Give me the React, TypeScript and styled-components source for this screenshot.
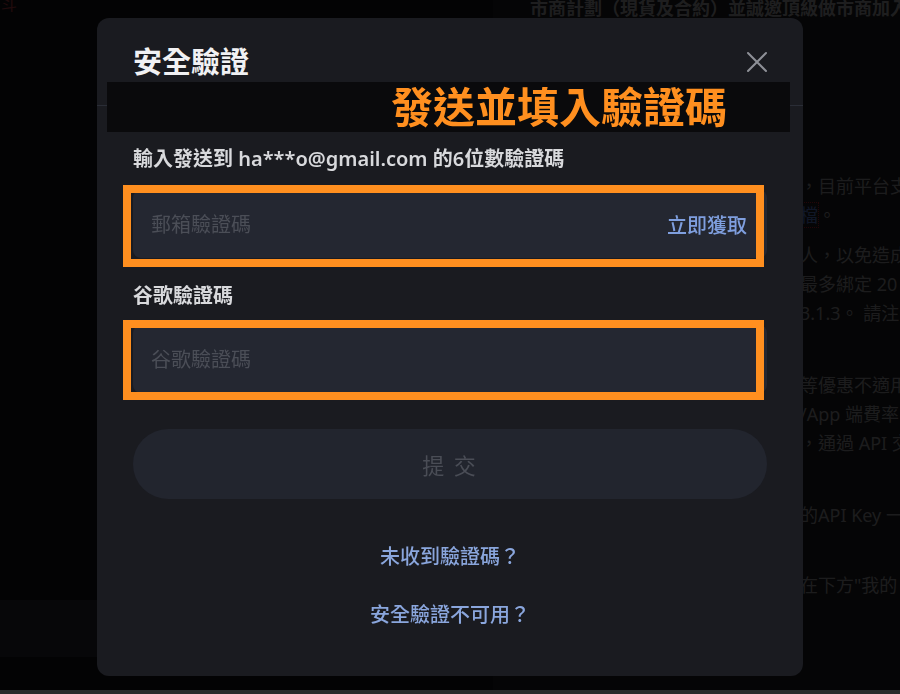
import React from "react";
import styled, { createGlobalStyle } from "styled-components";

const GlobalStyle = createGlobalStyle`
  * { box-sizing: border-box; }
  html, body { margin: 0; padding: 0; }
  body {
    background: #d3d4d6;
    font-family: "Noto Sans", "Noto Sans CJK TC", sans-serif;
  }
`;

const Page = styled.div`
  display: flex;
  width: 900px;
  height: 690px;
  overflow: hidden;
`;

const LeftPane = styled.div`
  width: 493px;
  display: flex;
  flex-direction: column;
  background: #101014;
`;

const FadedGlyph = styled.div`
  height: 12px;
  overflow: hidden;
  font-size: 16px;
  line-height: 10px;
  color: #a03840;
  padding-left: 1px;
`;

const FooterBand = styled.div`
  margin-top: auto;
  margin-bottom: 33px;
  height: 57px;
  background: #24242e;
`;

const RightPane = styled.div`
  flex: 1;
  display: flex;
  flex-direction: column;
  background: #1a1a1e;
  padding-left: 37px;
  overflow: hidden;
`;

const TopLine = styled.div`
  height: 16px;
  line-height: 16px;
  font-size: 18px;
  font-weight: 700;
  color: #98989c;
  white-space: nowrap;
`;

const SideColumn = styled.div`
  margin-top: 156px;
  margin-left: 270px;
  width: 100px;
  display: flex;
  flex-direction: column;
`;

const Para = styled.div<{ $gap: number }>`
  margin-top: ${(p) => p.$gap}px;
  font-size: 18px;
  line-height: 29px;
  color: #8e8e92;
  white-space: nowrap;
`;

const DocLink = styled.span`
  color: #5272c0;
  outline: 1px dotted #b01e28;
`;

const Mask = styled.div`
  position: fixed;
  inset: 0;
  height: 694px;
  background: rgba(0, 0, 0, 0.8);
  display: flex;
  align-items: center;
  justify-content: center;
`;

const Modal = styled.div`
  position: relative;
  width: 706px;
  height: 658px;
  background: #1a1b20;
  border-radius: 12px;
  display: flex;
  flex-direction: column;
`;

const Header = styled.div`
  height: 88px;
  padding: 0 35px 0 36px;
  display: flex;
  align-items: center;
  justify-content: space-between;
  border-bottom: 1px solid #2a2d36;
`;

const Title = styled.h2`
  margin: 0;
  font-size: 29px;
  line-height: 36px;
  font-weight: 700;
  color: #f1f1f3;
`;

const CloseButton = styled.button`
  width: 22px;
  height: 22px;
  padding: 0;
  border: none;
  background: none;
  display: flex;
  align-items: center;
  justify-content: center;
  cursor: pointer;
`;

const Annotation = styled.div`
  position: absolute;
  top: 64px;
  left: 10px;
  width: 683px;
  height: 50px;
  background: #0a0a0c;
  display: flex;
  align-items: center;
  justify-content: flex-end;
  padding-right: 63px;
  font-size: 42px;
  line-height: 50px;
  font-weight: 700;
  color: #ff8f1f;
`;

const Body = styled.div`
  padding: 39px 36px 0;
  display: flex;
  flex-direction: column;
`;

const Label = styled.div<{ $top?: number; $bottom: number }>`
  margin-top: ${(p) => p.$top ?? 0}px;
  margin-bottom: ${(p) => p.$bottom}px;
  font-size: 20px;
  line-height: 28px;
  font-weight: 600;
  color: #d8d9dc;
`;

const Field = styled.div`
  position: relative;
  height: 68px;
  border-radius: 8px;
  background: #242731;
  display: flex;
  align-items: center;
  padding: 0 20px 0 18px;
`;

const CodeInput = styled.input`
  flex: 1;
  min-width: 0;
  border: none;
  outline: none;
  background: transparent;
  padding: 0;
  font-family: "Noto Sans", "Noto Sans CJK TC", sans-serif;
  font-size: 20px;
  color: #e0e0e0;
  &::placeholder {
    color: #4b4e57;
  }
`;

const FetchCode = styled.span`
  font-size: 20px;
  font-weight: 500;
  color: #7f9fdf;
`;

const Highlight = styled.div<{ $bottom: number }>`
  position: absolute;
  top: -5px;
  left: -10px;
  right: 3px;
  bottom: ${(p) => -p.$bottom}px;
  border: 8px solid #ff8f1f;
  pointer-events: none;
`;

const SubmitButton = styled.button`
  margin-top: 36px;
  height: 70px;
  border: none;
  border-radius: 35px;
  background: #22252e;
  font-family: "Noto Sans", "Noto Sans CJK TC", sans-serif;
  font-size: 22px;
  letter-spacing: 2px;
  color: #4a4d56;
`;

const HelpLink = styled.a<{ $top: number }>`
  margin-top: ${(p) => p.$top}px;
  align-self: center;
  font-size: 20px;
  line-height: 28px;
  font-weight: 500;
  color: #8aa6dd;
  text-decoration: none;
`;

const CloseIcon = () => (
  <svg width="22" height="22" viewBox="0 0 22 22" fill="none">
    <path d="M2 2 L20 20 M20 2 L2 20" stroke="#8e9097" strokeWidth="2" strokeLinecap="round" />
  </svg>
);

export default function App() {
  return (
    <>
      <GlobalStyle />
      <Page>
        <LeftPane>
          <FadedGlyph>斗</FadedGlyph>
          <FooterBand />
        </LeftPane>
        <RightPane>
          <TopLine>市商計劃（現貨及合約）並誠邀頂級做市商加入</TopLine>
          <SideColumn>
            <Para $gap={0}>
              ，目前平台支持
              <br />
              <DocLink>檔</DocLink>。
            </Para>
            <Para $gap={11}>
              人，以免造成
              <br />
              最多綁定 20 個
              <br />
              3.1.3。 請注意
            </Para>
            <Para $gap={43}>
              等優惠不適用
              <br />
              /App 端費率
              <br />
              ，通過 API 交易
            </Para>
            <Para $gap={43}>的API Key 一</Para>
            <Para $gap={41}>在下方"我的</Para>
          </SideColumn>
        </RightPane>
      </Page>
      <Mask>
        <Modal>
          <Header>
            <Title>安全驗證</Title>
            <CloseButton aria-label="close">
              <CloseIcon />
            </CloseButton>
          </Header>
          <Annotation>發送並填入驗證碼</Annotation>
          <Body>
            <Label $bottom={17}>輸入發送到 ha***o@gmail.com 的6位數驗證碼</Label>
            <Field>
              <CodeInput placeholder="郵箱驗證碼" />
              <FetchCode>立即獲取</FetchCode>
              <Highlight $bottom={9} />
            </Field>
            <Label $top={24} $bottom={15}>谷歌驗證碼</Label>
            <Field>
              <CodeInput placeholder="谷歌驗證碼" />
              <Highlight $bottom={7} />
            </Field>
            <SubmitButton>提 交</SubmitButton>
            <HelpLink $top={44} href="#">未收到驗證碼？</HelpLink>
            <HelpLink $top={30} href="#">安全驗證不可用？</HelpLink>
          </Body>
        </Modal>
      </Mask>
    </>
  );
}
